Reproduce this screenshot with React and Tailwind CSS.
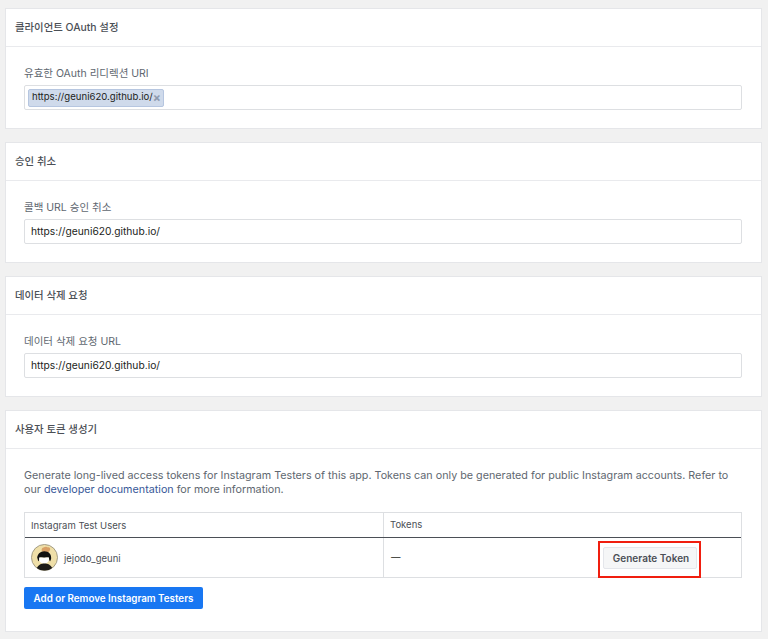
const stack = 'font-["Inter","Noto_Sans_CJK_KR",sans-serif]';

function Card({ title, children }) {
  return (
    <section className="bg-white border border-[#e5e6e9]">
      <div className="h-[38px] flex items-center px-[9px] border-b border-[#e9eaed] text-[10.4px] leading-[16px] font-medium text-[#4b4f56]">
        {title}
      </div>
      {children}
    </section>
  );
}

function Field({ label, value }) {
  return (
    <div className="pt-[19px] pl-[18px] pr-[19px] pb-[18px]">
      <div className="h-[16px] mb-[3px] text-[10.5px] leading-[16px] text-[#606770]">{label}</div>
      <div className="h-[25px] border border-[#dddfe2] rounded-[2px] flex items-center px-[6px] text-[10.25px] text-[#1c1e21]">{value}</div>
    </div>
  );
}

function Avatar() {
  return (
    <svg width="27" height="27" viewBox="0 0 28 28" className="shrink-0">
      <circle cx="14" cy="14" r="13.5" fill="#efdfa8" stroke="#8b8672" strokeWidth="0.8" />
      <path d="M11 6c.2-1.4 1-2.8 2.2-2.4.8-.8 3.4-1 4.4 0 1.4-.6 2.6.8 2.2 2.2-.2 1-.8 2-1.8 2.6-1.8.6-4.4.6-5.6 0-.8-.6-1.4-1.4-1.4-2.4z" fill="#d9a066" />
      <path d="M6.5 15c-.4-4.4 3.2-7.6 7.4-7.6s7.4 2.8 7 7.6c-.2 1.6-1.2 3-1.2 3-1-1-1-3.2-1.4-4-2.6.2-6.6.2-9.2 0-.6 1-.4 3-1.4 4 0 0-.8-1.2-.8-3z" fill="#111" />
      <path d="M8.5 14c2.6.2 7.4.2 10 0 .6 2.6-.2 6-5 6.4-4 0-5.4-3.4-5-6.4z" fill="#fff" />
      <path d="M6 25c1.6-3.6 4.6-4.8 8-4.8s6.4 1.2 8 4.8c-2 1.8-5 2.6-8 2.6s-6-.8-8-2.6z" fill="#1d1b18" />
    </svg>
  );
}

export default function App() {
  return (
    <div className={`w-[768px] h-[639px] overflow-hidden bg-[#f1f1f1] pt-[8px] pl-[5px] pr-[6px] flex flex-col gap-[13px] ${stack} antialiased`}>
      <Card title="클라이언트 OAuth 설정">
        <Field
          label="유효한 OAuth 리디렉션 URI"
          value={
            <span className="-ml-[3px] h-[18px] w-[136px] pl-[3px] flex items-center justify-between pr-[2px] bg-[#cfdaeb] border border-[#b6c6e0] rounded-[2px] text-[9.6px] text-[#1c1e21]">
              https://geuni620.github.io/
              <span className="text-[#8d99ae] text-[12px] leading-none font-bold">×</span>
            </span>
          }
        />
      </Card>
      <Card title="승인 취소">
        <Field label="콜백 URL 승인 취소" value="https://geuni620.github.io/" />
      </Card>
      <Card title="데이터 삭제 요청">
        <Field label="데이터 삭제 요청 URL" value="https://geuni620.github.io/" />
      </Card>
      <Card title="사용자 토큰 생성기">
        <div className="pt-[20px] pl-[18px] pr-[19px] pb-[22px]">
          <p className="text-[10.75px] leading-[14px] text-[#606770]">
            Generate long-lived access tokens for Instagram Testers of this app. Tokens can only be generated for public Instagram accounts. Refer to our{" "}
            <span className="text-[#385898]">developer documentation</span> for more information.
          </p>
          <div className="mt-[15px] border border-[#dddfe2] text-[9.5px] text-[#4b4f56]">
            <div className="h-[25px] flex border-b border-[#4b4f56]">
              <div className="w-[359px] border-r border-[#dddfe2] px-[6px] pt-[2px] flex items-center">Instagram Test Users</div>
              <div className="flex-1 px-[6px] pt-[1px] flex items-center">Tokens</div>
            </div>
            <div className="h-[39px] flex">
              <div className="w-[359px] border-r border-[#dddfe2] px-[6px] flex items-center gap-[6px]">
                <Avatar />
                <span className="mt-[3px]">jejodo_geuni</span>
              </div>
              <div className="flex-1 pl-[7px] flex items-center justify-between">
                <span className="text-[#1c1e21]">—</span>
                <div className="relative mr-[44px]">
                  <button className="block h-[22px] w-[94px] pt-[1px] pl-[2px] bg-[#f5f6f7] border border-[#e4e6eb] rounded-[2px] text-[10px] font-semibold text-[#4b4f56]">
                    Generate Token
                  </button>
                  <span className="absolute -left-[5px] -right-[4px] -top-[6px] -bottom-[9px] border-[2px] border-[#f01e0f]" />
                </div>
              </div>
            </div>
          </div>
          <button className="mt-[9px] h-[22px] w-[179px] pt-[3px] bg-[#1877f2] rounded-[2px] text-[9.8px] font-semibold text-white block">
            Add or Remove Instagram Testers
          </button>
        </div>
      </Card>
    </div>
  );
}
